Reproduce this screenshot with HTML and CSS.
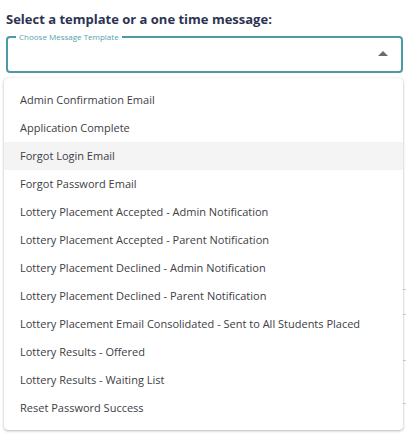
FILE: index.html
```html
<!DOCTYPE html>
<html>
<head>
<meta charset="utf-8">
<link rel="stylesheet" href="styles.css">
</head>
<body>
<div class="page">
  <div class="bg-lines">
    <span class="tick t1"></span>
    <span class="tick t2"></span>
    <span class="tick t3"></span>
    <span class="tick t4"></span>
  </div>
  <h2 class="title">Select a template or a one time message:</h2>
  <div class="field">
    <fieldset class="outline"><legend>Choose Message Template</legend></fieldset>
    <span class="arrow"></span>
  </div>
  <ul class="menu">
    <li>Admin Confirmation Email</li>
    <li>Application Complete</li>
    <li class="hover">Forgot Login Email</li>
    <li>Forgot Password Email</li>
    <li>Lottery Placement Accepted - Admin Notification</li>
    <li>Lottery Placement Accepted - Parent Notification</li>
    <li>Lottery Placement Declined - Admin Notification</li>
    <li>Lottery Placement Declined - Parent Notification</li>
    <li>Lottery Placement Email Consolidated - Sent to All Students Placed</li>
    <li>Lottery Results - Offered</li>
    <li>Lottery Results - Waiting List</li>
    <li>Reset Password Success</li>
  </ul>
</div>
</body>
</html>
```
FILE: styles.css
```css
* { box-sizing: border-box; }
html, body {
  margin: 0;
  padding: 0;
  background: #fff;
  font-family: "Open Sans", "Noto Sans", sans-serif;
}
.page {
  position: relative;
  width: 406px;
  height: 434px;
  overflow: hidden;
  padding: 9px 3px 0 4px;
}
.title {
  margin: 0 0 0 2px;
  font-size: 13px;
  line-height: 20px;
  font-weight: 700;
  color: #2c3452;
}
.field {
  position: relative;
  margin: 8px 0 0 2px;
  height: 36px;
  width: 397px;
}
.outline {
  position: absolute;
  inset: -5px 0 0 0;
  margin: 0;
  padding: 0 8px;
  border: 2px solid #4a9ba4;
  border-radius: 4px;
}
.outline legend {
  padding: 0 3px;
  font-size: 8px;
  line-height: 10px;
  color: #55a3ab;
}
.arrow {
  position: absolute;
  right: 15px;
  top: 14px;
  width: 0;
  height: 0;
  border-left: 5px solid transparent;
  border-right: 5px solid transparent;
  border-bottom: 5px solid #6b6b6b;
}
.menu {
  position: relative;
  z-index: 2;
  list-style: none;
  margin: 5px 0 0 0;
  padding: 8px 0;
  width: 399px;
  background: #fff;
  border-radius: 4px;
  box-shadow: 0 1px 3px rgba(0,0,0,0.28), 0 0 1px rgba(0,0,0,0.12);
}
.menu li {
  height: 28px;
  line-height: 28px;
  padding-left: 16px;
  font-size: 11px;
  color: #3d4045;
  white-space: nowrap;
}
.menu li.hover {
  background: #f4f4f4;
}
.bg-lines {
  position: absolute;
  inset: 0;
}
.tick {
  position: absolute;
  right: 0;
  width: 4px;
  height: 1px;
  background: #c9d6ea;
}
.t1 { top: 289px; }
.t2 { top: 314px; }
.t3 { top: 360px; }
.t4 { top: 403px; }
```
